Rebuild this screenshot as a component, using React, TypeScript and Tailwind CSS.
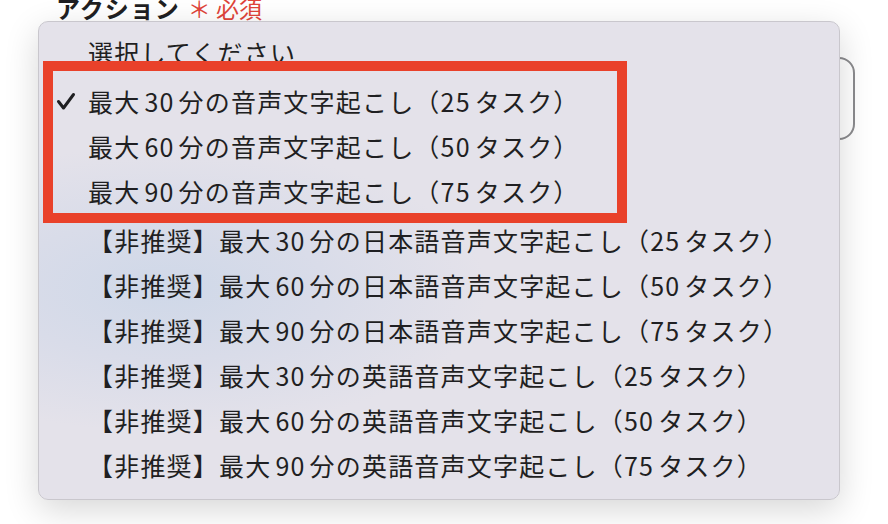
import React from "react";

const options = [
  { label: "最大30分の音声文字起こし（25タスク）", checked: true },
  { label: "最大60分の音声文字起こし（50タスク）" },
  { label: "最大90分の音声文字起こし（75タスク）" },
];

const deprecated = [
  "【非推奨】最大30分の日本語音声文字起こし（25タスク）",
  "【非推奨】最大60分の日本語音声文字起こし（50タスク）",
  "【非推奨】最大90分の日本語音声文字起こし（75タスク）",
  "【非推奨】最大30分の英語音声文字起こし（25タスク）",
  "【非推奨】最大60分の英語音声文字起こし（50タスク）",
  "【非推奨】最大90分の英語音声文字起こし（75タスク）",
];

// digits get a little breathing room like macOS does between kana and latin
const Label = ({ text }: { text: string }) => {
  const parts = text.split(/(\d+)/);
  return (
    <span className="tracking-[1.2px]">
      {parts.map((p, i) =>
        /^\d+$/.test(p) ? (
          <span key={i} className={parts[i - 1]?.endsWith("（") ? "mr-[4px]" : "mx-[4px]"}>
            {p}
          </span>
        ) : (
          <span key={i}>{p}</span>
        )
      )}
    </span>
  );
};

const Check = () => (
  <svg width="20" height="19" viewBox="0 0 20 19" className="block">
    <path d="M2.5 9.5 L7.5 16 L17.5 2.5" fill="none" stroke="#1f1f22" strokeWidth="3" strokeLinecap="round" strokeLinejoin="round" />
  </svg>
);

const Row = ({ text, checked }: { text: string; checked?: boolean }) => (
  <div className="flex h-[45px] items-center">
    <div className="flex w-[49px] shrink-0 justify-start pl-[17px]">{checked && <Check />}</div>
    <Label text={text} />
  </div>
);

export default function App() {
  return (
    <div
      className="relative h-[524px] w-[888px] overflow-hidden bg-white text-[#1f1f22]"
      style={{ fontFamily: '"Noto Sans CJK JP", "Noto Sans", sans-serif' }}
    >
      {/* form behind the popup */}
      <div className="absolute left-[56px] top-[-6px] flex items-baseline gap-[8px] text-[24px] font-bold leading-[28px]">
        <span className="tracking-[1px]">アクション</span>
        <span className="text-[23px] font-normal text-[#e0443a]">＊ 必須</span>
      </div>
      <div className="absolute left-[200px] top-[57px] h-[83px] w-[655px] rounded-[16px] border-2 border-[#8b8b8e] bg-white" />

      {/* popup menu */}
      <div className="absolute left-[38px] top-[21px] h-[479px] w-[802px] rounded-[10px] border border-[#c9c7cd] bg-[radial-gradient(ellipse_40%_30%_at_16%_56%,#cfd8e8_0%,#d9dce9_50%,#e4e2ea_100%)] pt-[8px] text-[25px] leading-[45px] shadow-[0_10px_34px_rgba(0,0,0,0.16)]">
        <Row text="選択してください" />
        <div className="mt-[4px]">
          {options.map((o) => (
            <Row key={o.label} text={o.label} checked={o.checked} />
          ))}
        </div>
        <div className="mt-[4px]">
          {deprecated.map((d) => (
            <Row key={d} text={d} />
          ))}
        </div>
      </div>

      {/* highlight annotation */}
      <div className="absolute left-[43px] top-[61px] h-[162px] w-[584px] border-[10px] border-[#e9412a]" />
    </div>
  );
}
